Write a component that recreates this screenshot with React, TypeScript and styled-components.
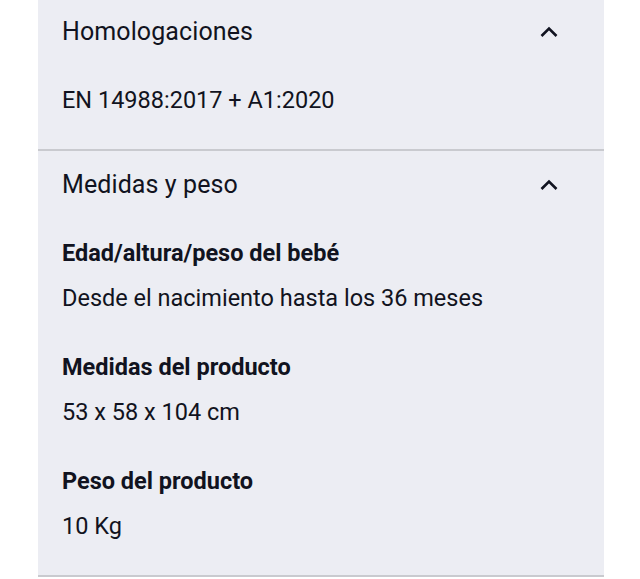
import React from "react";
import styled, { createGlobalStyle } from "styled-components";

const Global = createGlobalStyle`
  html, body { margin: 0; padding: 0; background: #ffffff; }
  body { font-family: Roboto, "Liberation Sans", Arial, sans-serif; -webkit-font-smoothing: antialiased; }
`;

const Page = styled.div`
  width: 640px;
  height: 579px;
  overflow: hidden;
  padding-left: 38px;
  box-sizing: border-box;
`;

const Panel = styled.div`
  width: 566px;
  margin-top: -2px;
  background: #ecedf3;
`;

const Section = styled.section`
  border-bottom: 2px solid #c9cacf;
`;

const Header = styled.div`
  height: 68px;
  display: flex;
  align-items: center;
  justify-content: space-between;
  padding: 0 43px 0 24px;
`;

const Title = styled.h2`
  margin: 0;
  font-size: 25px;
  font-weight: 400;
  letter-spacing: 0.1px;
  color: #111320;
  line-height: 30px;
`;

const Content = styled.div`
  padding: 19px 24px 34px;
  display: flex;
  flex-direction: column;
  gap: 39px;
`;

const Item = styled.div`
  display: flex;
  flex-direction: column;
  gap: 15px;
`;

const Label = styled.div`
  font-size: 23.5px;
  font-weight: 700;
  color: #111320;
  line-height: 30px;
`;

const Value = styled.div`
  font-size: 23.5px;
  font-weight: 400;
  color: #111320;
  line-height: 30px;
`;

const Chevron = () => (
  <svg width="24" height="24" viewBox="0 0 24 24" fill="none">
    <polyline points="4.5 16 12 8.5 19.5 16" stroke="#111320" strokeWidth="2.6" strokeLinecap="butt" strokeLinejoin="miter" />
  </svg>
);

export default function App() {
  return (
    <>
      <Global />
      <Page>
        <Panel>
          <Section>
            <Header>
              <Title>Homologaciones</Title>
              <Chevron />
            </Header>
            <Content>
              <Value>EN 14988:2017 + A1:2020</Value>
            </Content>
          </Section>
          <Section>
            <Header>
              <Title>Medidas y peso</Title>
              <Chevron />
            </Header>
            <Content>
              <Item>
                <Label>Edad/altura/peso del bebé</Label>
                <Value>Desde el nacimiento hasta los 36 meses</Value>
              </Item>
              <Item>
                <Label>Medidas del producto</Label>
                <Value>53 x 58 x 104 cm</Value>
              </Item>
              <Item>
                <Label>Peso del producto</Label>
                <Value>10 Kg</Value>
              </Item>
            </Content>
          </Section>
        </Panel>
      </Page>
    </>
  );
}
